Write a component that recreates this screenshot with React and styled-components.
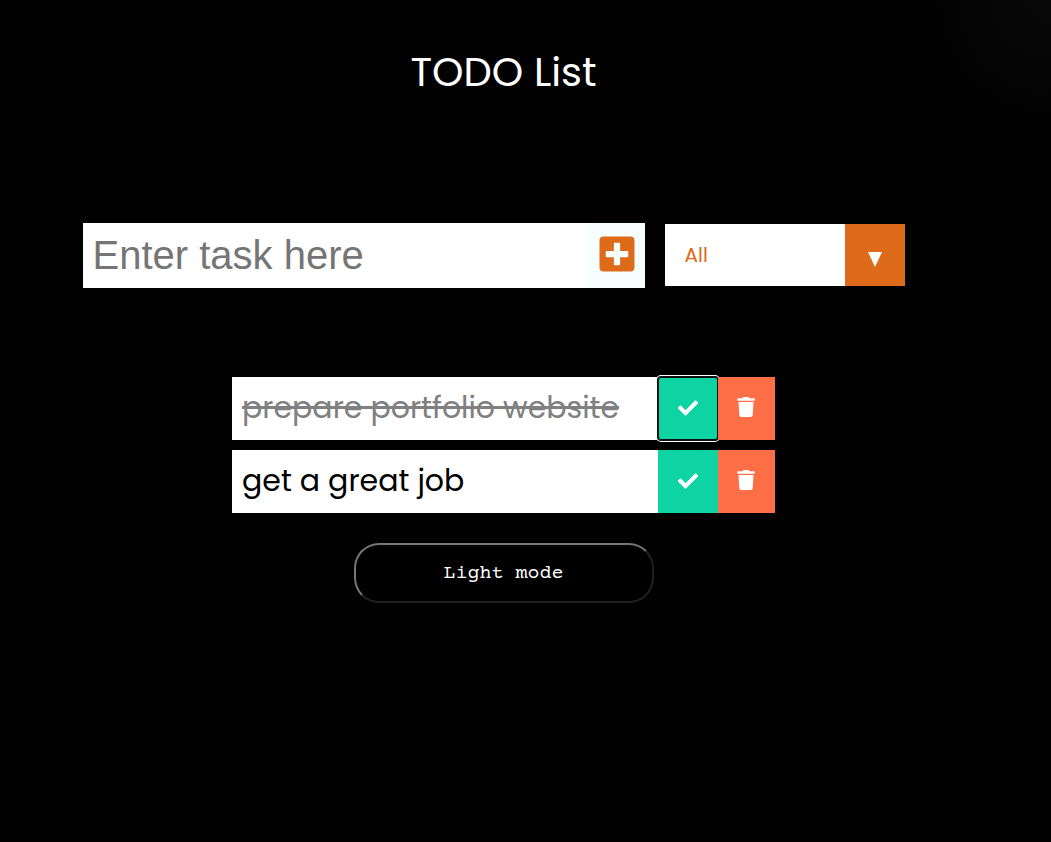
import React, { useState } from "react";
import styled, { createGlobalStyle } from "styled-components";
import { FaCheck, FaPlusSquare, FaTrash } from "react-icons/fa";

const GlobalStyle = createGlobalStyle`
  * {
    box-sizing: border-box;
    margin: 0;
    padding: 0;
  }
  body {
    min-height: 100vh;
    background: radial-gradient(circle at top right, #080808 0, #010101 140px) #010101;
    color: white;
    font-family: Poppins, Inter, sans-serif;
  }
  button, input, select {
    border: none;
    border-radius: 0;
    appearance: none;
  }
`;

const Page = styled.div`
  display: flex;
  flex-direction: column;
  align-items: center;
  padding-right: 44px;
`;

const Header = styled.header`
  display: flex;
  align-items: center;
  height: 144px;
`;

const Title = styled.h1`
  font-size: 40px;
  font-weight: 400;
`;

const Form = styled.form`
  display: flex;
  align-items: flex-start;
  justify-content: center;
  width: 100%;
  margin: 79px 0 89px;
`;

const TaskField = styled.div`
  display: flex;
  width: 562px;
  height: 65px;
`;

const TaskInput = styled.input`
  flex: 1;
  min-width: 0;
  padding: 0 10px;
  background: white;
  font-family: "Liberation Sans", Arial, sans-serif;
  font-size: 40px;
  &::placeholder {
    color: #757575;
  }
`;

const AddButton = styled.button`
  display: grid;
  place-items: center;
  width: 57px;
  padding: 0 0 3px 1px;
  background: #f7fffe;
  color: #dd6b1a;
  font-size: 40px;
  cursor: pointer;
`;

const FilterBox = styled.div`
  display: grid;
  grid-template-columns: 1fr 60px;
  width: 240px;
  height: 62px;
  margin: 1px 20px;
`;

const Filter = styled.select`
  grid-area: 1 / 1 / 2 / 3;
  padding: 0 80px 0 20px;
  background: white;
  color: #dd6b1a;
  font-family: Poppins, Inter, sans-serif;
  font-size: 20px;
  cursor: pointer;
`;

const FilterArrow = styled.span`
  grid-area: 1 / 2 / 2 / 3;
  display: grid;
  place-items: center;
  z-index: 1;
  padding-top: 8px;
  background: #dd6b1a;
  pointer-events: none;
`;

const TodoList = styled.ul`
  display: flex;
  flex-direction: column;
  gap: 10px;
  width: 543px;
  max-width: 100%;
  list-style: none;
`;

const TodoRow = styled.li`
  display: flex;
  height: 63px;
  background: white;
`;

const TodoText = styled.span`
  flex: 1;
  padding: 0 10px;
  color: ${(p) => (p.$done ? "#808080" : "black")};
  font-size: 30px;
  line-height: 61px;
  text-decoration: ${(p) => (p.$done ? "line-through" : "none")};
  white-space: nowrap;
`;

const RowButton = styled.button`
  display: grid;
  place-items: center;
  width: ${(p) => (p.$kind === "check" ? 60 : 57)}px;
  padding: ${(p) => (p.$kind === "check" ? "0 0 2px" : "0 1px 3px 0")};
  background: ${(p) => (p.$kind === "check" ? "#0dd4a2" : "#ff6f47")};
  color: white;
  font-size: 20px;
  cursor: pointer;
  ${(p) =>
    p.$active &&
    `
    border-radius: 3px;
    box-shadow: inset 0 0 0 1px #101010, 0 0 0 1px #101010, 0 0 0 2px white;
  `}
`;

const ModeButton = styled.button`
  width: 300px;
  height: 60px;
  margin-top: 30px;
  border: 2px solid;
  border-color: #767676 #212121 #212121 #767676;
  border-radius: 25px;
  background: black;
  color: white;
  font-family: "Courier Prime", "Courier New", "Liberation Mono", monospace;
  font-size: 20px;
  cursor: pointer;
`;

const initialTodos = [
  { text: "prepare portfolio website", done: true },
  { text: "get a great job", done: false },
];

export default function App() {
  const [todos, setTodos] = useState(initialTodos);
  const [draft, setDraft] = useState("");
  const [filter, setFilter] = useState("all");
  const [active, setActive] = useState(0);

  const addTodo = (event) => {
    event.preventDefault();
    if (!draft.trim()) return;
    setTodos([...todos, { text: draft, done: false }]);
    setDraft("");
  };
  const toggle = (todo, index) => {
    setActive(index);
    setTodos(todos.map((t) => (t === todo ? { ...t, done: !t.done } : t)));
  };
  const visible = todos.filter((t) => filter === "all" || t.done === (filter === "completed"));

  return (
    <>
      <GlobalStyle />
      <Page>
        <Header>
          <Title>TODO List</Title>
        </Header>
        <Form onSubmit={addTodo}>
          <TaskField>
            <TaskInput
              aria-label="Task"
              placeholder="Enter task here"
              value={draft}
              onChange={(e) => setDraft(e.target.value)}
            />
            <AddButton type="submit" aria-label="Add task">
              <FaPlusSquare />
            </AddButton>
          </TaskField>
          <FilterBox>
            <Filter aria-label="Filter tasks" value={filter} onChange={(e) => setFilter(e.target.value)}>
              <option value="all">All</option>
              <option value="completed">Completed</option>
              <option value="uncompleted">Uncompleted</option>
            </Filter>
            <FilterArrow aria-hidden="true">
              <svg width="14" height="15" viewBox="0 0 14 15" fill="white">
                <path d="M0 0h14L7 15z" />
              </svg>
            </FilterArrow>
          </FilterBox>
        </Form>
        <TodoList>
          {visible.map((todo, i) => (
            <TodoRow key={i}>
              <TodoText $done={todo.done}>{todo.text}</TodoText>
              <RowButton $kind="check" $active={i === active} aria-label="Complete task" onClick={() => toggle(todo, i)}>
                <FaCheck />
              </RowButton>
              <RowButton
                $kind="trash"
                aria-label="Delete task"
                onClick={() => setTodos(todos.filter((t) => t !== todo))}
              >
                <FaTrash />
              </RowButton>
            </TodoRow>
          ))}
        </TodoList>
        <ModeButton>Light mode</ModeButton>
      </Page>
    </>
  );
}
